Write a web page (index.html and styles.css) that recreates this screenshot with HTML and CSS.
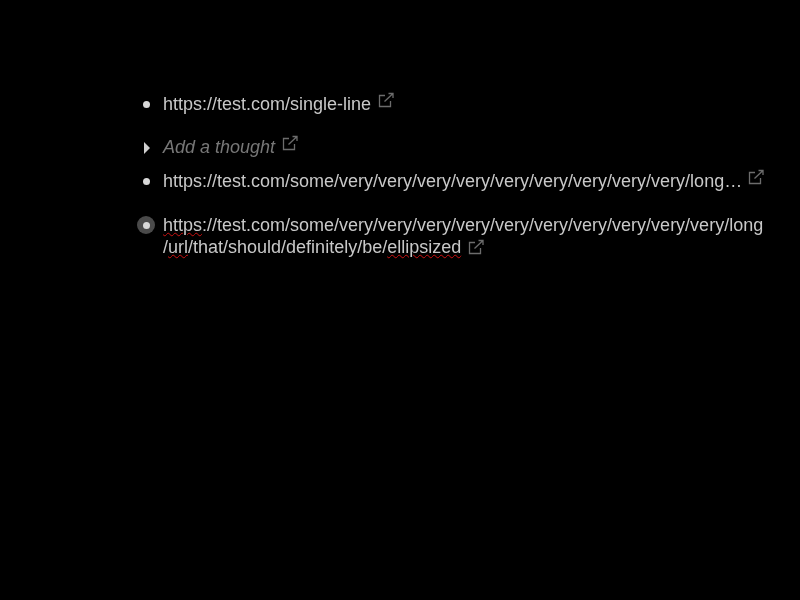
FILE: index.html
```html
<!DOCTYPE html>
<html lang="en">
<head>
<meta charset="utf-8">
<title>Links</title>
<link rel="stylesheet" href="styles.css">
</head>
<body>
<ul class="list">
  <li class="row row-single">
    <span class="marker"><span class="dot"></span></span>
    <span class="text">https://test.com/single-line</span>
    <svg class="ext" viewBox="0 0 16 16"><path d="M7 3.500H1.500v11h11V9M6.500 9.500 15 1.500M10.500 1.500H15V6"/></svg>
  </li>
  <li class="row row-thought">
    <span class="marker"><span class="tri"></span></span>
    <span class="text thought">Add a thought</span>
    <svg class="ext" viewBox="0 0 16 16"><path d="M7 3.500H1.500v11h11V9M6.500 9.500 15 1.500M10.500 1.500H15V6"/></svg>
  </li>
  <li class="row row-ellipsis">
    <span class="marker"><span class="dot"></span></span>
    <span class="text clip">https://test.com/some/very/very/very/very/very/very/very/very/very/long/url/that/should/definitely/be/ellipsized</span>
    <svg class="ext" viewBox="0 0 16 16"><path d="M7 3.500H1.500v11h11V9M6.500 9.500 15 1.500M10.500 1.500H15V6"/></svg>
  </li>
  <li class="row row-full">
    <span class="marker"><span class="halo"></span><span class="dot"></span></span>
    <span class="text wrap"><span class="typo">https</span>://test.com/some/very/very/very/very/very/very/very/very/very/very/long<br>/<span class="typo">url</span>/that/should/definitely/be/<span class="typo">ellipsized</span><svg class="ext inline" viewBox="0 0 16 16"><path d="M7 3.500H1.500v11h11V9M6.500 9.500 15 1.500M10.500 1.500H15V6"/></svg></span>
  </li>
</ul>
</body>
</html>
```
FILE: styles.css
```css
html, body {
  margin: 0;
  height: 100%;
  background: #000;
}
body {
  padding: 93px 0 0 136px;
  box-sizing: border-box;
  font-family: "Liberation Sans", Arial, sans-serif;
  font-size: 18px;
  line-height: 22px;
  color: #c8c8c8;
  overflow: hidden;
}
.list {
  list-style: none;
  margin: 0;
  padding: 0;
  width: 630px;
  will-change: opacity;
}
.row {
  display: flex;
  align-items: flex-start;
}
.row-single { margin-bottom: 21px; }
.row-thought { margin-bottom: 12px; }
.row-ellipsis { margin-bottom: 22px; }
.marker {
  position: relative;
  flex: none;
  width: 20px;
  height: 22px;
  margin-right: 7px;
  display: flex;
  align-items: center;
  justify-content: center;
}
.dot {
  position: relative;
  width: 7px;
  height: 7px;
  border-radius: 50%;
  background: #d8d8d8;
}
.halo {
  position: absolute;
  left: 1px;
  top: 2px;
  width: 18px;
  height: 18px;
  border-radius: 50%;
  background: #4a4a4a;
}
.tri {
  width: 0;
  height: 0;
  margin-top: 1px;
  margin-left: 2px;
  border-left: 6px solid #d0d0d0;
  border-top: 6px solid transparent;
  border-bottom: 6px solid transparent;
}
.text { display: block; }
.thought {
  font-style: italic;
  color: #777;
}
.clip {
  width: 579.5px;
  white-space: nowrap;
  overflow: hidden;
  text-overflow: ellipsis;
}
.row-ellipsis .ext { margin-left: 5.500px; }
.wrap { width: 610px; white-space: nowrap; }
.typo {
  text-decoration: underline wavy #c11;
  text-decoration-thickness: 1px;
  text-underline-offset: 1px;
}
.ext {
  flex: none;
  width: 16px;
  height: 16px;
  margin: -1px 0 0 7px;
  fill: none;
  stroke: #6c6c6c;
  stroke-width: 1.3;
}
.ext.inline {
  display: inline-block;
  vertical-align: -2px;
  margin: 0 0 0 7px;
}
```
